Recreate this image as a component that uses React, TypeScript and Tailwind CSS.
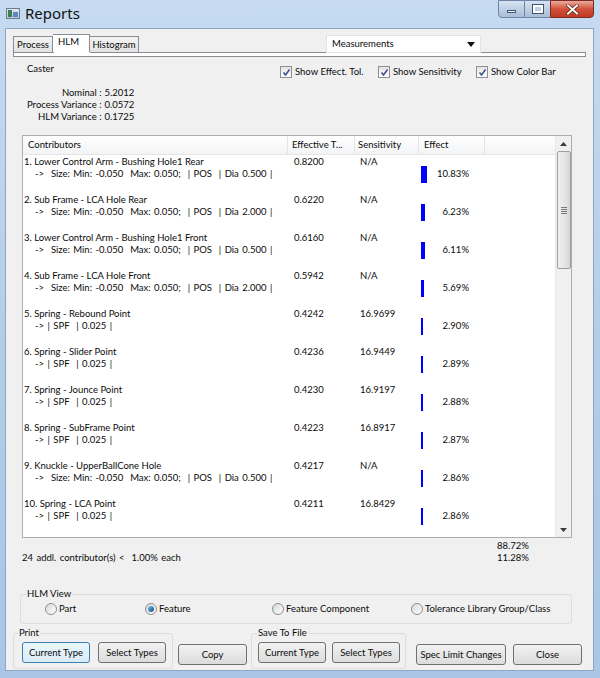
import React from "react";

type Row = { title: string; sub: string; eff: string; sens: string; pct: string; bar: number };

const rows: Row[] = [
  { title: "1. Lower Control Arm - Bushing Hole1 Rear", sub: "->  Size: Min: -0.050  Max: 0.050;  | POS  | Dia 0.500 |", eff: "0.8200", sens: "N/A", pct: "10.83%", bar: 6 },
  { title: "2. Sub Frame - LCA Hole Rear", sub: "->  Size: Min: -0.050  Max: 0.050;  | POS  | Dia 2.000 |", eff: "0.6220", sens: "N/A", pct: "6.23%", bar: 4 },
  { title: "3. Lower Control Arm - Bushing Hole1 Front", sub: "->  Size: Min: -0.050  Max: 0.050;  | POS  | Dia 0.500 |", eff: "0.6160", sens: "N/A", pct: "6.11%", bar: 4 },
  { title: "4. Sub Frame - LCA Hole Front", sub: "->  Size: Min: -0.050  Max: 0.050;  | POS  | Dia 2.000 |", eff: "0.5942", sens: "N/A", pct: "5.69%", bar: 3 },
  { title: "5. Spring - Rebound Point", sub: "-> | SPF  | 0.025 |", eff: "0.4242", sens: "16.9699", pct: "2.90%", bar: 2 },
  { title: "6. Spring - Slider Point", sub: "-> | SPF  | 0.025 |", eff: "0.4236", sens: "16.9449", pct: "2.89%", bar: 2 },
  { title: "7. Spring - Jounce Point", sub: "-> | SPF  | 0.025 |", eff: "0.4230", sens: "16.9197", pct: "2.88%", bar: 2 },
  { title: "8. Spring - SubFrame Point", sub: "-> | SPF  | 0.025 |", eff: "0.4223", sens: "16.8917", pct: "2.87%", bar: 2 },
  { title: "9. Knuckle - UpperBallCone Hole", sub: "->  Size: Min: -0.050  Max: 0.050;  | POS  | Dia 0.500 |", eff: "0.4217", sens: "N/A", pct: "2.86%", bar: 2 },
  { title: "10. Spring - LCA Point", sub: "-> | SPF  | 0.025 |", eff: "0.4211", sens: "16.8429", pct: "2.86%", bar: 2 },
];

function Check({ label }: { label: string }) {
  return (
    <div className="flex items-center gap-[3px]">
      <div className="w-[12px] h-[12px] border border-[#8f8f8f] bg-gradient-to-b from-[#e4e4e4] to-[#ffffff] flex items-center justify-center">
        <svg width="9" height="9" viewBox="0 0 9 9">
          <path d="M1.5 4.5 L3.5 7 L7.5 1.5" stroke="#3a4f8a" strokeWidth="1.5" fill="none" />
        </svg>
      </div>
      <span>{label}</span>
    </div>
  );
}

function Radio({ label, checked }: { label: string; checked?: boolean }) {
  return (
    <div className="flex items-center gap-[2px]">
      <div className="w-[12px] h-[12px] rounded-full border border-[#8f8f8f] bg-gradient-to-br from-[#d8d8d8] to-[#ffffff] flex items-center justify-center">
        {checked && <div className="w-[6px] h-[6px] rounded-full bg-gradient-to-br from-[#6fc0f0] to-[#0b4f8a]" />}
      </div>
      <span>{label}</span>
    </div>
  );
}

function Btn({ label, w, focused }: { label: string; w: string; focused?: boolean }) {
  return (
    <div
      className={
        "h-[21px] flex items-center justify-center rounded-[3px] border " +
        w +
        (focused
          ? " border-[#3c7fb1] bg-gradient-to-b from-[#eaf6fd] to-[#d9ecf8]"
          : " border-[#707070] bg-gradient-to-b from-[#f2f2f2] to-[#dcdcdc]")
      }
    >
      {label}
    </div>
  );
}

export default function App() {
  return (
    <div className="w-[600px] h-[678px] bg-gradient-to-b from-[#c6dbf1] via-[#b3cde9] to-[#a9c6e6] flex flex-col [font-family:'Lato',sans-serif] text-[9.5px] text-[#0a0a0a] leading-[12px] overflow-hidden">
      {/* Title bar */}
      <div className="h-[28px] flex items-start relative">
        <div className="mt-[8px] ml-[6px] w-[14px] h-[11px] border border-[#6a7d94] bg-gradient-to-b from-[#dfe8f2] to-[#b9c9da] flex items-end gap-[1px] px-[1px] pb-[1px]">
          <div className="w-[4px] h-[7px] bg-[#3d7f4e]" />
          <div className="w-[6px] h-[5px] bg-[#5b88c2]" />
        </div>
        <span className="ml-[5px] mt-[3px] text-[15px] leading-[20px] text-[#111] [font-family:'Noto_Sans',sans-serif]">Reports</span>
        <div className="ml-auto mr-[6px] flex h-[19px]">
          <div className="w-[27px] h-[18px] border border-[#6d83a3] rounded-bl-[4px] bg-gradient-to-b from-[#d7e3f2] to-[#a9bdd6] flex items-end justify-center pb-[4px]">
            <div className="w-[9px] h-[3px] bg-white border border-[#40536e]" />
          </div>
          <div className="w-[25px] h-[18px] border-y border-[#6d83a3] bg-gradient-to-b from-[#d7e3f2] to-[#a9bdd6] flex items-center justify-center">
            <div className="w-[10px] h-[8px] border-[2px] border-white outline outline-1 outline-[#40536e]" />
          </div>
          <div className="w-[44px] h-[18px] border border-[#7a2a20] rounded-br-[4px] bg-gradient-to-b from-[#e9a99a] via-[#d1503a] to-[#c23a22] flex items-center justify-center">
            <svg width="13" height="11" viewBox="0 0 13 11">
              <path d="M2 1.5 L11 9.5 M11 1.5 L2 9.5" stroke="#5a1a10" strokeWidth="3.4" strokeLinecap="square" />
              <path d="M2 1.5 L11 9.5 M11 1.5 L2 9.5" stroke="#ffffff" strokeWidth="2" strokeLinecap="square" />
            </svg>
          </div>
        </div>
      </div>

      {/* Client area */}
      <div className="ml-[5px] w-[589px] h-[643px] bg-[#f0f0f0] border border-[#8ea6c2] flex flex-col">
        {/* Tabs row */}
        <div className="h-[28px] flex items-start relative">
          <div className="ml-[7px] mt-[5px] flex flex-col">
            <div className="flex items-end h-[18px]">
              <div className="h-[16px] w-[40px] border border-[#898c95] border-b-0 bg-gradient-to-b from-[#f3f3f3] to-[#e3e3e3] flex items-center justify-center">Process</div>
              <div className="h-[18px] w-[37px] pl-[5px] border border-[#898c95] border-b-0 border-l-0 bg-white flex items-start pt-[1px]">HLM</div>
              <div className="h-[16px] w-[49px] border border-[#898c95] border-b-0 border-l-0 bg-gradient-to-b from-[#f3f3f3] to-[#e3e3e3] flex items-center justify-center">Histogram</div>
            </div>
            <div className="w-[573px] h-[5px] border border-[#898c95] border-t-0 bg-white relative">
              <div className="h-px bg-[#898c95] absolute top-0 left-0 w-[40px]" />
              <div className="h-px bg-[#898c95] absolute top-0 left-[76px] right-0" />
            </div>
          </div>
          <div className="absolute left-[320px] top-[6px] w-[155px] h-[18px] bg-white border border-[#e3e3e3] flex items-center px-[5px]">
            <span>Measurements</span>
            <svg className="ml-auto" width="8" height="5" viewBox="0 0 8 5"><path d="M0 0 H8 L4 5 Z" fill="#111" /></svg>
          </div>
        </div>

        {/* Caster + checkboxes */}
        <div className="mt-[6px] flex items-start">
          <div className="ml-[21px] w-[253px]">Caster</div>
          <div className="mt-[3px] flex gap-0">
            <div className="w-[98px]"><Check label="Show Effect. Tol." /></div>
            <div className="w-[98px]"><Check label="Show Sensitivity" /></div>
            <div><Check label="Show Color Bar" /></div>
          </div>
        </div>

        {/* Variances */}
        <div className="mt-[9px] ml-[21px] grid grid-cols-[auto_auto] w-max">
          <div className="text-right">Nominal :</div><div className="pl-[3px]">5.2012</div>
          <div className="text-right">Process Variance :</div><div className="pl-[3px]">0.0572</div>
          <div className="text-right">HLM Variance :</div><div className="pl-[3px]">0.1725</div>
        </div>

        {/* Table */}
        <div className="mt-[12px] ml-[16px] w-[550px] h-[403px] border border-[#abadb3] bg-white flex overflow-hidden">
          <div className="flex-1 flex flex-col">
            <div className="h-[19px] flex border-b border-[#e5e5e5] bg-gradient-to-b from-[#ffffff] to-[#f3f4f6] shrink-0">
              <div className="w-[265px] pl-[5px] flex items-center border-r border-[#e5e5e5]">Contributors</div>
              <div className="w-[67px] pl-[4px] flex items-center border-r border-[#e5e5e5]">Effective T...</div>
              <div className="w-[64px] pl-[3px] flex items-center border-r border-[#e5e5e5]">Sensitivity</div>
              <div className="w-[66px] pl-[5px] flex items-center border-r border-[#e5e5e5]">Effect</div>
              <div className="flex-1" />
            </div>
            {rows.map((r, i) => (
              <div key={i} className="h-[38px] flex shrink-0">
                <div className="w-[265px] pl-[1px] pt-[1px]">
                  <div>{r.title}</div>
                  <div className="pl-[11px] whitespace-pre [word-spacing:1px]">{r.sub}</div>
                </div>
                <div className="w-[67px] pl-[6px] pt-[1px]">{r.eff}</div>
                <div className="w-[64px] pl-[5px] pt-[1px]">{r.sens}</div>
                <div className="w-[66px] pl-[2px] flex items-center">
                  <div className="h-[17px] bg-[#0000ff]" style={{ width: r.bar }} />
                  <div className="ml-auto mr-[16px]">{r.pct}</div>
                </div>
              </div>
            ))}
          </div>
          {/* Scrollbar */}
          <div className="w-[16px] bg-[#f0f0f0] border-l border-[#e8e8e8] flex flex-col items-center">
            <div className="h-[15px] flex items-center justify-center">
              <svg width="7" height="4" viewBox="0 0 7 4"><path d="M0 4 L3.5 0 L7 4 Z" fill="#3a3a3a" /></svg>
            </div>
            <div className="w-[14px] h-[118px] rounded-[2px] border border-[#9e9e9e] bg-gradient-to-r from-[#f0f0f0] via-[#e6e6e6] to-[#d6d6d6] flex flex-col items-center justify-center gap-[1px]">
              <div className="w-[6px] h-px bg-[#7a7a7a]" />
              <div className="w-[6px] h-px bg-[#7a7a7a]" />
              <div className="w-[6px] h-px bg-[#7a7a7a]" />
              <div className="w-[6px] h-px bg-[#7a7a7a]" />
            </div>
            <div className="flex-1" />
            <div className="h-[15px] flex items-center justify-center">
              <svg width="7" height="4" viewBox="0 0 7 4"><path d="M0 0 L7 0 L3.5 4 Z" fill="#3a3a3a" /></svg>
            </div>
          </div>
        </div>

        {/* Summary */}
        <div className="mt-[2px] flex">
          <div className="ml-[16px] w-[475px] pt-[12px] [word-spacing:1px]">24 addl. contributor(s) &lt;&nbsp; 1.00% each</div>
          <div className="flex flex-col">
            <div>88.72%</div>
            <div>11.28%</div>
          </div>
        </div>

        {/* HLM View group */}
        <fieldset className="mt-[25px] ml-[14px] w-[552px] h-[35px] border border-[#dcdcdc] rounded-[3px] px-[5px] min-w-0">
          <legend className="px-[1px] leading-[10px]">HLM View</legend>
          <div className="flex items-center mt-[4px]">
            <div className="ml-[19px] w-[100px]"><Radio label="Part" /></div>
            <div className="w-[127px]"><Radio label="Feature" checked /></div>
            <div className="w-[139px]"><Radio label="Feature Component" /></div>
            <div><Radio label="Tolerance Library Group/Class" /></div>
          </div>
        </fieldset>

        {/* Bottom buttons */}
        <div className="mt-[4px] ml-[7px] flex items-end">
          <fieldset className="w-[160px] h-[41px] border border-[#dcdcdc] rounded-[3px] min-w-0 pl-[8px]">
            <legend className="-ml-[4px] px-[1px] leading-[10px]">Print</legend>
            <div className="flex gap-[8px] mt-[4px]">
              <Btn label="Current Type" w="w-[68px]" focused />
              <Btn label="Select Types" w="w-[68px]" />
            </div>
          </fieldset>
          <div className="ml-[5px] mb-[4px]"><Btn label="Copy" w="w-[69px]" /></div>
          <fieldset className="ml-[4px] w-[155px] h-[41px] border border-[#dcdcdc] rounded-[3px] min-w-0 pl-[6px]">
            <legend className="-ml-[1px] px-[1px] leading-[10px]">Save To File</legend>
            <div className="flex gap-[6px] mt-[4px]">
              <Btn label="Current Type" w="w-[68px]" />
              <Btn label="Select Types" w="w-[68px]" />
            </div>
          </fieldset>
          <div className="ml-[10px] mb-[4px]"><Btn label="Spec Limit Changes" w="w-[90px]" /></div>
          <div className="ml-[7px] mb-[4px]"><Btn label="Close" w="w-[69px]" /></div>
        </div>
      </div>
    </div>
  );
}
